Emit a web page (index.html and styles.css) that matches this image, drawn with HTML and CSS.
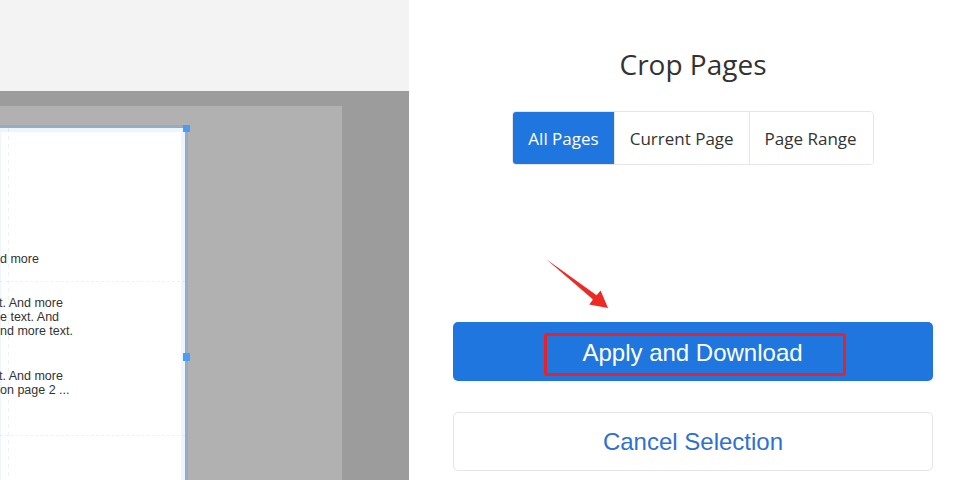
FILE: index.html
```html
<!DOCTYPE html>
<html lang="en">
<head>
<meta charset="utf-8">
<title>Crop Pages</title>
<link rel="stylesheet" href="styles.css">
</head>
<body>
<div class="app">
  <section class="viewer">
    <div class="viewer-top"></div>
    <div class="viewer-canvas">
      <div class="sheet">
        <div class="page">
          <div class="block block-first">
            <p class="line">d more</p>
          </div>
          <div class="block block-second">
            <p class="para">t. And more<br>e text. And<br>nd more text.</p>
            <p class="para para-last">t. And more<br>on page 2 ...</p>
          </div>
        </div>
        <div class="selection">
          <span class="handle handle-top"></span>
          <span class="handle handle-mid"></span>
        </div>
      </div>
    </div>
  </section>
  <aside class="panel">
    <h1 class="title">Crop Pages</h1>
    <div class="seg-group">
      <button class="seg seg-active">All Pages</button>
      <button class="seg">Current Page</button>
      <button class="seg">Page Range</button>
    </div>
    <button class="btn btn-primary"><span class="mark">Apply and Download</span></button>
    <button class="btn btn-outline">Cancel Selection</button>
  </aside>
</div>
<svg class="annot-arrow" width="960" height="480" viewBox="0 0 960 480" aria-hidden="true">
  <polygon points="546,259 596.6,295.2 600.6,290.4 608,308 589.2,304.4 593,299.6" fill="#ee2a24"/>
</svg>
</body>
</html>
```

FILE: styles.css
```css
* { box-sizing: border-box; }
html, body { margin: 0; padding: 0; }
body {
  width: 960px;
  height: 480px;
  overflow: hidden;
  background: #ffffff;
  font-family: "Open Sans", "Noto Sans", sans-serif;
  position: relative;
}
.app {
  display: flex;
  height: 480px;
}
.viewer {
  width: 409px;
  flex: none;
  display: flex;
  flex-direction: column;
  overflow: hidden;
}
.viewer-top {
  height: 91px;
  background: #f3f3f3;
  flex: none;
}
.viewer-canvas {
  flex: 1;
  background: #9c9c9c;
  padding-top: 15px;
  overflow: hidden;
}
.sheet {
  width: 342px;
  height: 100%;
  background: #b1b1b1;
  position: relative;
  padding-top: 22px;
}
.page {
  width: 185px;
  height: 360px;
  background-color: #ffffff;
  background-image: repeating-linear-gradient(to bottom, #eef1f6 0 4px, transparent 4px 8px);
  background-size: 1px 100%;
  background-position: 8px 0;
  background-repeat: no-repeat;
  font-family: "Liberation Sans", Arial, sans-serif;
  font-size: 12.5px;
  line-height: 14px;
  color: #333333;
}
.block-first {
  height: 154px;
  padding-top: 124px;
  border-bottom: 1px dashed #eef1f6;
}
.line, .para { margin: 0; white-space: nowrap; }
.para { text-indent: -1px; }
.block-second {
  height: 154px;
  padding-top: 14px;
  border-bottom: 1px dashed #eef1f6;
}
.para-last { margin-top: 31px; }
.selection {
  position: absolute;
  top: 19px;
  left: -6px;
  width: 194px;
  height: 470px;
  border: 3px solid rgba(60, 150, 255, 0.22);
  box-shadow: inset 0 0 0 4px rgba(60, 150, 255, 0.09);
}
.handle {
  position: absolute;
  width: 7px;
  height: 7px;
  background: #4b9cf5;
  right: -5px;
}
.handle-top { top: -3px; }
.handle-mid { top: 225px; height: 8px; }

.panel {
  flex: 1;
  display: flex;
  flex-direction: column;
  padding: 45px 27px 0 44px;
}
.title {
  margin: 0;
  font-size: 28px;
  font-weight: 400;
  line-height: 38px;
  color: #333333;
  text-align: center;
}
.seg-group {
  align-self: center;
  display: flex;
  margin-top: 28px;
  height: 54px;
  border: 1px solid #e6e6e6;
  border-radius: 4px;
  overflow: hidden;
}
.seg {
  font-family: "Open Sans", "Noto Sans", sans-serif;
  font-size: 17px;
  color: #333333;
  background: #ffffff;
  border: 0;
  border-left: 1px solid #e6e6e6;
  padding: 0 15px;
  margin: 0;
}
.seg:first-child { border-left: 0; }
.seg:last-child { padding-right: 16px; }
.seg-active {
  background: #2076df;
  color: #ffffff;
  margin: -1px 0 -1px -1px;
  padding-left: 16px;
}
.btn {
  display: flex;
  align-items: center;
  justify-content: center;
  height: 59px;
  border-radius: 5px;
  font-family: "Liberation Sans", Arial, sans-serif;
  font-size: 24px;
  margin: 0;
  padding: 0;
}
.btn-primary {
  margin-top: 157px;
  background: #2076df;
  color: #ffffff;
  border: 0;
}
.mark {
  display: inline-block;
  border: 3px solid #ea2227;
  border-radius: 3px;
  padding: 1px 40px 5px 35px;
  line-height: 31px;
  margin: 6px 0 0 4px;
}
.btn-outline {
  margin-top: 31px;
  background: #ffffff;
  color: #2e70d2;
  border: 1px solid #e5e5e5;
}
.annot-arrow {
  position: absolute;
  left: 0;
  top: 0;
  pointer-events: none;
}
```
